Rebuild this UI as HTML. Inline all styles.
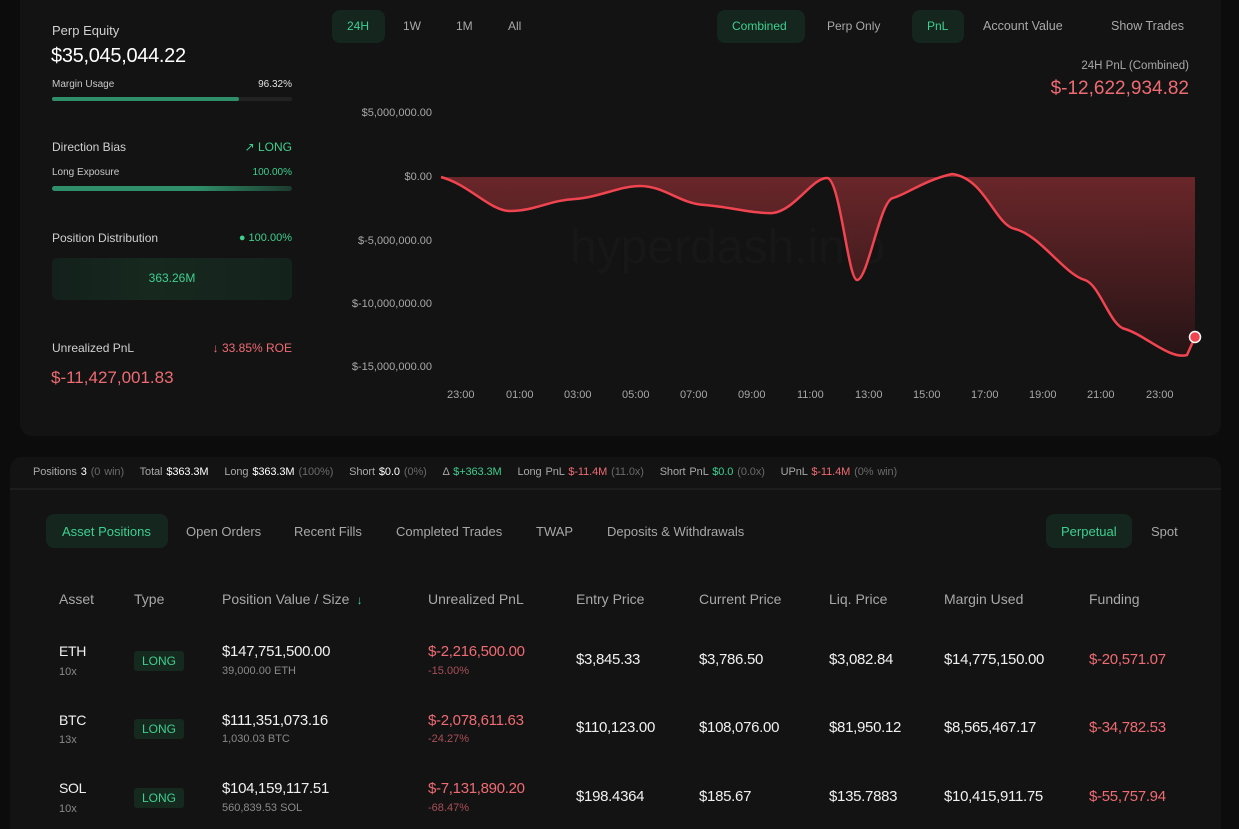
<!DOCTYPE html><html><head><meta charset="utf-8"><style>
*{margin:0;padding:0;box-sizing:border-box}
body{width:1239px;height:829px;background:#0c0c0c;font-family:"Liberation Sans",sans-serif;color:#e8e8e8;position:relative;overflow:hidden}
.a{position:absolute;white-space:nowrap}
.m{color:#a8a8a8}.d{color:#6a6a6a}
.pill{position:absolute;background:#15261f;border-radius:8px}
.yl{position:absolute;right:807px;font-size:11px;color:#a8a8a8}
.xl{position:absolute;top:389px;font-size:11px;color:#a8a8a8}
.th{position:absolute;top:591px;font-size:14px;color:#a8a8a8}
.v{position:absolute;font-size:15px;color:#f0f0f0;letter-spacing:-.3px}
.s{position:absolute;font-size:11px;color:#8a8a8a}
.lg{position:absolute;left:134px;width:50px;height:20px;background:#15291f;border-radius:3px;color:#3ecf8e;font-size:12px;text-align:center;line-height:20px}
.g{color:#3ecf8e !important}.r{color:#ef6b73 !important}
</style></head><body>
<div class="a" style="left:20px;top:0;width:1201px;height:436px;background:#131313;border-radius:0 0 12px 12px"></div>
<div class="a" style="left:10px;top:457px;width:1211px;height:372px;background:#131313;border-radius:12px 12px 0 0"></div>
<div class="a" style="left:10px;top:488px;width:1211px;height:2px;background:#1d1d1d"></div>

<div class="a" style="left:52px;top:23px;font-size:13px;color:#d0d0d0">Perp Equity</div>
<div class="a" style="left:51px;top:45px;font-size:20px;color:#fff;letter-spacing:-.3px">$35,045,044.22</div>
<div class="a" style="left:52px;top:79px;font-size:10px;color:#c8c8c8">Margin Usage</div>
<div class="a" style="right:947px;top:79px;font-size:10px;color:#e0e0e0">96.32%</div>
<div class="a" style="left:52px;top:97px;width:240px;height:4px;background:#222;border-radius:2px"></div>
<div class="a" style="left:52px;top:97px;width:187px;height:4px;background:#2f8f6a;border-radius:2px"></div>

<div class="a" style="left:52px;top:140px;font-size:12px;color:#d0d0d0">Direction Bias</div>
<div class="a g" style="right:947px;top:140px;font-size:12px">↗ LONG</div>
<div class="a" style="left:52px;top:167px;font-size:10px;color:#c8c8c8">Long Exposure</div>
<div class="a g" style="right:947px;top:167px;font-size:10px">100.00%</div>
<div class="a" style="left:52px;top:186px;width:240px;height:5px;background:linear-gradient(90deg,#2f8f6a 60%,#1c3a2e);border-radius:3px"></div>

<div class="a" style="left:52px;top:231px;font-size:12px;color:#d0d0d0">Position Distribution</div>
<div class="a g" style="right:947px;top:232px;font-size:11px">● 100.00%</div>
<div class="a" style="left:52px;top:258px;width:240px;height:42px;background:linear-gradient(90deg,#13201b,#17291f 40%,#14221c);border-radius:5px"></div>
<div class="a g" style="left:52px;top:271px;width:240px;text-align:center;font-size:12px">363.26M</div>

<div class="a" style="left:52px;top:341px;font-size:12px;color:#d0d0d0">Unrealized PnL</div>
<div class="a r" style="right:947px;top:341px;font-size:12px">↓ 33.85% ROE</div>
<div class="a r" style="left:51px;top:368px;font-size:17px">$-11,427,001.83</div>

<div class="pill" style="left:332px;top:10px;width:53px;height:33px"></div>
<div class="a g" style="left:347px;top:19px;font-size:12px">24H</div>
<div class="a m" style="left:403px;top:19px;font-size:12px">1W</div>
<div class="a m" style="left:456px;top:19px;font-size:12px">1M</div>
<div class="a m" style="left:508px;top:19px;font-size:12px">All</div>
<div class="pill" style="left:717px;top:10px;width:88px;height:33px"></div>
<div class="a g" style="left:732px;top:19px;font-size:12px">Combined</div>
<div class="a m" style="left:827px;top:19px;font-size:12px">Perp Only</div>
<div class="pill" style="left:912px;top:10px;width:52px;height:33px"></div>
<div class="a g" style="left:927px;top:19px;font-size:12px">PnL</div>
<div class="a m" style="left:983px;top:19px;font-size:12.5px">Account Value</div>
<div class="a m" style="left:1111px;top:19px;font-size:12.5px">Show Trades</div>
<div class="a m" style="right:50px;top:60px;font-size:11.5px">24H PnL (Combined)</div>
<div class="a r" style="right:50px;top:78px;font-size:19px">$-12,622,934.82</div>

<div class="yl" style="top:107px">$5,000,000.00</div>
<div class="yl" style="top:171px">$0.00</div>
<div class="yl" style="top:235px">$-5,000,000.00</div>
<div class="yl" style="top:298px">$-10,000,000.00</div>
<div class="yl" style="top:361px">$-15,000,000.00</div>
<div class="xl" style="left:447px">23:00</div><div class="xl" style="left:506px">01:00</div><div class="xl" style="left:564px">03:00</div><div class="xl" style="left:622px">05:00</div><div class="xl" style="left:680px">07:00</div><div class="xl" style="left:738px">09:00</div><div class="xl" style="left:797px">11:00</div><div class="xl" style="left:855px">13:00</div><div class="xl" style="left:913px">15:00</div><div class="xl" style="left:971px">17:00</div><div class="xl" style="left:1029px">19:00</div><div class="xl" style="left:1087px">21:00</div><div class="xl" style="left:1146px">23:00</div>
<div class="a" style="left:570px;top:220px;font-size:48px;color:#171717">hyperdash.info</div>
<svg class="a" style="left:0;top:0" width="1239" height="440">
<defs><linearGradient id="f" x1="0" y1="0" x2="0" y2="1"><stop offset="0" stop-color="#7a2a2e"/><stop offset="1" stop-color="#2a1416"/></linearGradient></defs>
<path d="M441,177 C470,185 490,211 510,211 C535,211 550,200 575,199 C600,197 620,186 640,186 C665,186 680,204 705,205 C730,207 755,214 773,213 C795,210 812,178 827,178 C840,178 848,280 857,280 C868,280 880,200 893,198 C905,195 925,180 952,174 C985,178 995,225 1015,229 C1040,235 1065,275 1085,280 C1100,285 1110,326 1125,329 C1145,335 1170,360 1187,355 L1195,337 L1195,177 Z" fill="url(#f)" opacity=".85"/>
<path d="M441,177 C470,185 490,211 510,211 C535,211 550,200 575,199 C600,197 620,186 640,186 C665,186 680,204 705,205 C730,207 755,214 773,213 C795,210 812,178 827,178 C840,178 848,280 857,280 C868,280 880,200 893,198 C905,195 925,180 952,174 C985,178 995,225 1015,229 C1040,235 1065,275 1085,280 C1100,285 1110,326 1125,329 C1145,335 1170,360 1187,355 L1195,337" fill="none" stroke="#f04550" stroke-width="2.5"/>
<circle cx="1195" cy="337" r="5.5" fill="#f04550" stroke="#fff" stroke-width="1.5"/>
</svg>

<div class="a" style="left:33px;top:466px;font-size:11px;letter-spacing:-.1px;word-spacing:1px">
<span class="m">Positions</span> <span style="color:#fff">3</span> <span class="d">(0 win)</span>&nbsp;&nbsp;&nbsp;
<span class="m">Total</span> <span style="color:#fff">$363.3M</span>&nbsp;&nbsp;&nbsp;
<span class="m">Long</span> <span style="color:#fff">$363.3M</span> <span class="d">(100%)</span>&nbsp;&nbsp;&nbsp;
<span class="m">Short</span> <span style="color:#fff">$0.0</span> <span class="d">(0%)</span>&nbsp;&nbsp;&nbsp;
<span class="m">Δ</span> <span class="g">$+363.3M</span>&nbsp;&nbsp;&nbsp;
<span class="m">Long PnL</span> <span class="r">$-11.4M</span> <span class="d">(11.0x)</span>&nbsp;&nbsp;&nbsp;
<span class="m">Short PnL</span> <span class="g">$0.0</span> <span class="d">(0.0x)</span>&nbsp;&nbsp;&nbsp;
<span class="m">UPnL</span> <span class="r">$-11.4M</span> <span class="d">(0% win)</span></div>

<div class="pill" style="left:46px;top:514px;width:122px;height:34px"></div>
<div class="a g" style="left:62px;top:524px;font-size:13px">Asset Positions</div>
<div class="a m" style="left:186px;top:524px;font-size:13px">Open Orders</div>
<div class="a m" style="left:294px;top:524px;font-size:13px">Recent Fills</div>
<div class="a m" style="left:396px;top:524px;font-size:13px">Completed Trades</div>
<div class="a m" style="left:536px;top:524px;font-size:13px">TWAP</div>
<div class="a m" style="left:607px;top:524px;font-size:13px">Deposits &amp; Withdrawals</div>
<div class="pill" style="left:1046px;top:514px;width:86px;height:34px"></div>
<div class="a g" style="left:1061px;top:524px;font-size:13px">Perpetual</div>
<div class="a m" style="left:1151px;top:524px;font-size:13px">Spot</div>

<div class="th" style="left:59px">Asset</div><div class="th" style="left:134px">Type</div>
<div class="th" style="left:222px">Position Value / Size <span class="g" style="font-size:12px">&nbsp;↓</span></div>
<div class="th" style="left:428px">Unrealized PnL</div><div class="th" style="left:576px">Entry Price</div>
<div class="th" style="left:699px">Current Price</div><div class="th" style="left:829px">Liq. Price</div>
<div class="th" style="left:944px">Margin Used</div><div class="th" style="left:1089px">Funding</div>

<div class="v" style="left:59px;top:643px;font-size:14px">ETH</div><div class="s" style="left:59px;top:666px">10x</div>
<div class="lg" style="top:651px">LONG</div>
<div class="v" style="left:222px;top:643px">$147,751,500.00</div><div class="s" style="left:222px;top:665px">39,000.00 ETH</div>
<div class="v r" style="left:428px;top:643px">$-2,216,500.00</div><div class="s" style="left:428px;top:665px;color:#a85058">-15.00%</div>
<div class="v" style="left:576px;top:651px">$3,845.33</div><div class="v" style="left:699px;top:651px">$3,786.50</div><div class="v" style="left:829px;top:651px">$3,082.84</div><div class="v" style="left:944px;top:651px">$14,775,150.00</div><div class="v r" style="left:1089px;top:651px">$-20,571.07</div>

<div class="v" style="left:59px;top:712px;font-size:14px">BTC</div><div class="s" style="left:59px;top:734px">13x</div>
<div class="lg" style="top:719px">LONG</div>
<div class="v" style="left:222px;top:712px">$111,351,073.16</div><div class="s" style="left:222px;top:733px">1,030.03 BTC</div>
<div class="v r" style="left:428px;top:712px">$-2,078,611.63</div><div class="s" style="left:428px;top:733px;color:#a85058">-24.27%</div>
<div class="v" style="left:576px;top:719px">$110,123.00</div><div class="v" style="left:699px;top:719px">$108,076.00</div><div class="v" style="left:829px;top:719px">$81,950.12</div><div class="v" style="left:944px;top:719px">$8,565,467.17</div><div class="v r" style="left:1089px;top:719px">$-34,782.53</div>

<div class="v" style="left:59px;top:780px;font-size:14px">SOL</div><div class="s" style="left:59px;top:803px">10x</div>
<div class="lg" style="top:788px">LONG</div>
<div class="v" style="left:222px;top:780px">$104,159,117.51</div><div class="s" style="left:222px;top:802px">560,839.53 SOL</div>
<div class="v r" style="left:428px;top:780px">$-7,131,890.20</div><div class="s" style="left:428px;top:802px;color:#a85058">-68.47%</div>
<div class="v" style="left:576px;top:788px">$198.4364</div><div class="v" style="left:699px;top:788px">$185.67</div><div class="v" style="left:829px;top:788px">$135.7883</div><div class="v" style="left:944px;top:788px">$10,415,911.75</div><div class="v r" style="left:1089px;top:788px">$-55,757.94</div>
</body></html>
